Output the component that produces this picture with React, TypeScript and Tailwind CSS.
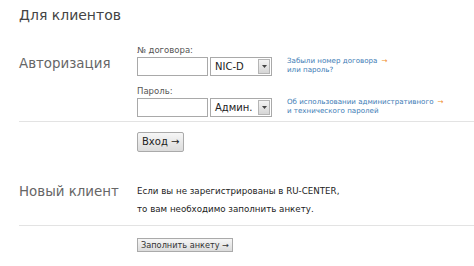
const font = { fontFamily: '"DejaVu Sans", Verdana, sans-serif' };

function Select({ value }: { value: string }) {
  return (
    <div className="flex h-[19px] w-[62px] items-center border border-[#a9a9a9] bg-white pl-[4px] pr-[1px]">
      <span className="flex-1 text-[10px] text-[#222]">{value}</span>
      <div className="flex h-[15px] w-[12px] items-center justify-center border border-[#b5b5b5] bg-gradient-to-b from-[#f4f4f4] to-[#d6d6d6]">
        <svg width="5" height="3" viewBox="0 0 5 3">
          <path d="M0 0h5L2.5 3z" fill="#444" />
        </svg>
      </div>
    </div>
  );
}

function Arrow() {
  return <span className="ml-[4px] text-[#f08a1c]">→</span>;
}

export default function App() {
  return (
    <div className="h-[266px] w-[474px] overflow-hidden bg-white" style={font}>
      <h1 className="pl-[19px] pt-[5px] text-[14px] leading-[20px] text-[#444]">Для клиентов</h1>

      <div className="mt-[20px] flex">
        <div className="w-[137px] shrink-0 pl-[19px] pt-[9px] text-[13.4px] text-[#666]">Авторизация</div>
        <div className="flex flex-col gap-[10px]">
          <div className="flex items-end">
            <div>
              <div className="mb-[2px] text-[8.5px] leading-[10px] text-[#555]">№ договора:</div>
              <div className="flex gap-[2px]">
                <div className="h-[19px] w-[71px] border border-[#a9a9a9] bg-white" />
                <Select value="NIC-D" />
              </div>
            </div>
            <div className="ml-[15px] pb-[2px] text-[7.1px] leading-[9px] text-[#3d7bb5]">
              Забыли номер договора<Arrow />
              <br />
              или пароль?
            </div>
          </div>
          <div className="flex items-end">
            <div>
              <div className="mb-[2px] text-[8.5px] leading-[10px] text-[#555]">Пароль:</div>
              <div className="flex gap-[2px]">
                <div className="h-[19px] w-[71px] border border-[#a9a9a9] bg-white" />
                <Select value="Админ." />
              </div>
            </div>
            <div className="ml-[15px] pb-[2px] text-[7.1px] leading-[9px] text-[#3d7bb5]">
              Об использовании административного<Arrow />
              <br />и технического паролей
            </div>
          </div>
        </div>
      </div>

      <div className="ml-[19px] mt-[4px] border-t border-[#e3e3e3]" />

      <div className="pl-[137px] pt-[6px]">
        <button className="h-[20px] rounded-[2px] border border-[#aaa] bg-gradient-to-b from-[#f6f6f6] to-[#dcdcdc] px-[4px] text-[10px] leading-[18px] text-[#222]">
          Вход →
        </button>
      </div>

      <div className="mt-[30px] flex">
        <div className="w-[137px] shrink-0 pl-[19px] pt-[0px] text-[13.4px] text-[#666]">Новый клиент</div>
        <p className="pt-[0px] text-[8.7px] leading-[18px] text-[#222]">
          Если вы не зарегистрированы в RU-CENTER,
          <br />
          то вам необходимо заполнить анкету.
        </p>
      </div>

      <div className="ml-[19px] mt-[7px] border-t border-[#e3e3e3]" />

      <div className="pl-[137px] pt-[5px]">
        <button className="h-[14px] border border-[#aaa] bg-gradient-to-b from-[#f6f6f6] to-[#dcdcdc] px-[3px] text-[8.2px] leading-[12px] text-[#333]">
          Заполнить анкету →
        </button>
      </div>
    </div>
  );
}
